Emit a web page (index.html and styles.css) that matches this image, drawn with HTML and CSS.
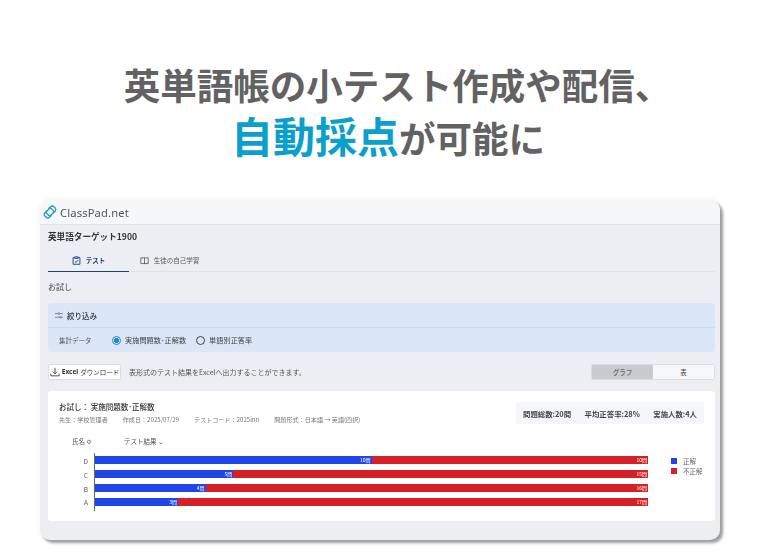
FILE: index.html
```html
<!DOCTYPE html>
<html lang="ja">
<head>
<meta charset="utf-8">
<title>ClassPad.net</title>
<link rel="stylesheet" href="styles.css">
</head>
<body>
<main class="page">
  <h1 class="headline">
    <span class="line first">英単語帳の小テスト作成や配信、</span>
    <span class="line second"><em class="accent">自動採点</em>が可能に</span>
  </h1>
  <section class="window">
    <header class="topbar">
      <svg class="logo" viewBox="0 0 14 14" fill="none" stroke="#1f9cc9" stroke-width="1.3">
        <path d="M5.4 3.8 7.6 1.7a2.3 2.3 0 0 1 3.3 0l1.2 1.2a2.3 2.3 0 0 1 0 3.3L9.9 8.4"/>
        <path d="M8.6 10.2 6.4 12.3a2.3 2.3 0 0 1-3.3 0L1.9 11.1a2.3 2.3 0 0 1 0-3.3L4.1 5.6"/>
        <path d="M4.6 9.4 3.7 8.5a1.6 1.6 0 0 1 0-2.3L6.2 3.7a1.6 1.6 0 0 1 2.3 0l.9.9"/>
        <path d="M9.4 4.6l.9.9a1.6 1.6 0 0 1 0 2.3L7.8 10.3a1.6 1.6 0 0 1-2.3 0l-.9-.9"/>
      </svg>
      <span class="brand">ClassPad.net</span>
    </header>
    <div class="content">
      <h2 class="course">英単語ターゲット1900</h2>
      <nav class="tabs">
        <div class="tab active">
          <svg class="tab-icon" viewBox="0 0 10 10" fill="none" stroke="currentColor" stroke-width="1"><path d="M2.5 1.8H1.2v7.4h7.6V1.8H7.5M3 1h4v1.6H3zM3.2 6l1.3 1.2 2.3-2.6"/></svg>
          <span>テスト</span>
        </div>
        <div class="tab">
          <svg class="tab-icon" viewBox="0 0 10 10" fill="none" stroke="currentColor" stroke-width=".9"><path d="M5 2v7M5 2H.9v6.4H5M5 2h4.1v6.4H5"/></svg>
          <span>生徒の自己学習</span>
        </div>
      </nav>
      <p class="crumb">お試し</p>
      <section class="filter">
        <div class="filter-head">
          <svg class="filter-icon" viewBox="0 0 10 8" fill="none" stroke="#555" stroke-width=".8"><path d="M0 1.6h3.6M6 1.6h4M0 6.2h5.6M8 6.2h2"/><circle cx="4.8" cy="1.6" r="1.1"/><circle cx="6.8" cy="6.2" r="1.1"/></svg>
          <span>絞り込み</span>
        </div>
        <div class="filter-body">
          <span class="filter-label">集計データ</span>
          <label class="radio on"><i class="dot"></i>実施問題数･正解数</label>
          <label class="radio"><i class="dot"></i>単語別正答率</label>
        </div>
      </section>
      <div class="actions">
        <button class="excel">
          <svg class="dl" viewBox="0 0 12 12" fill="none" stroke="#333" stroke-width="1"><path d="M6 1v7M3.4 5.6 6 8.2l2.6-2.6M1 8v2.6h10V8"/></svg>
          <b>Excel</b><span>ダウンロード</span>
        </button>
        <span class="hint">表形式のテスト結果をExcelへ出力することができます。</span>
        <div class="segment">
          <span class="seg on">グラフ</span>
          <span class="seg">表</span>
        </div>
      </div>
      <section class="card">
        <div class="card-head">
          <div class="card-info">
            <h3 class="card-title">お試し： 実施問題数･正解数</h3>
            <div class="meta">
              <span>先生：学校管理者</span>
              <span>作成日：2025/07/29</span>
              <span>テストコード：2025inn</span>
              <span>問題形式：日本語 → 英語(四択)</span>
            </div>
          </div>
          <div class="stats">
            <span>問題総数:20問</span>
            <span>平均正答率:28%</span>
            <span>実施人数:4人</span>
          </div>
        </div>
        <div class="columns">
          <span class="col-name">氏名 ≎</span>
          <span class="col-result">テスト結果 ⌄</span>
        </div>
        <div class="chart">
          <div class="names">
            <span>D</span><span>C</span><span>B</span><span>A</span>
          </div>
          <div class="bars">
            <div class="bar"><span class="ok" style="width:50%">10問</span><span class="ng">10問</span></div>
            <div class="bar"><span class="ok" style="width:25%">5問</span><span class="ng">15問</span></div>
            <div class="bar"><span class="ok" style="width:20%">4問</span><span class="ng">16問</span></div>
            <div class="bar"><span class="ok" style="width:15%">3問</span><span class="ng">17問</span></div>
          </div>
          <ul class="legend">
            <li><i class="swatch blue"></i>正解</li>
            <li><i class="swatch red"></i>不正解</li>
          </ul>
        </div>
      </section>
    </div>
  </section>
</main>
</body>
</html>
```
FILE: styles.css
```css
* { box-sizing: border-box; }
html, body { margin: 0; padding: 0; background: #fff; }
body { font-family: "Noto Sans CJK JP", "Noto Sans", sans-serif; color: #444; width: 761px; height: 557px; overflow: hidden; }
.page { padding-top: 60px; }
.headline { margin: 0; text-align: center; color: #626262; font-size: 36.5px; font-weight: 700; line-height: 50px; }
.line { display: block; white-space: nowrap; }
.line.first { padding-left: 34px; }
.line.second { padding-left: 15px; }
.accent { font-style: normal; color: #0b9fce; font-size: 42px; }
.window { margin: 37px 0 0 40px; width: 680px; height: 340px; background: #edeef2; border-radius: 10px; box-shadow: 3px 3px 3px rgba(0,0,0,.38), 0 0 6px rgba(0,0,0,.06); overflow: hidden; filter: blur(.4px); }
.topbar { height: 25px; background: #f6f7f9; border-bottom: 1px solid #e2e3e7; display: flex; align-items: center; padding-left: 3px; gap: 3px; }
.logo { width: 14px; height: 14px; }
.brand { font-family: "Noto Sans", sans-serif; font-size: 11.2px; letter-spacing: .15px; color: #555; }
.content { padding: 0 5px 0 8px; }
.course { margin: 5px 0 0; font-size: 8.6px; line-height: 13px; font-weight: 700; color: #333; }
.tabs { margin-top: 9px; height: 20px; display: flex; border-bottom: 1px solid #e2e3e7; }
.tab { width: 81px; display: flex; align-items: center; justify-content: center; gap: 5px; font-size: 6.5px; color: #555; padding-bottom: 3px; }
.tab.active { color: #1c3a80; font-weight: 700; border-bottom: 1px solid #1f3f86; height: 20px; }
.tab-icon { width: 9px; height: 9px; flex: none; }
.crumb { margin: 9px 0 0; font-size: 8px; line-height: 12px; color: #444; }
.filter { margin-top: 10px; height: 49px; background: #dbe6f9; border-radius: 4px; }
.filter-head { height: 25px; padding-left: 7px; display: flex; align-items: center; gap: 4px; font-size: 7.5px; font-weight: 500; border-bottom: 1px solid #cfdaee; color: #333; }
.filter-icon { width: 8px; height: 7px; }
.filter-body { height: 24px; display: flex; align-items: center; padding-left: 11px; font-size: 7.2px; color: #444; }
.filter-label { width: 53px; font-size: 6.5px; color: #555; }
.radio { display: flex; align-items: center; gap: 4px; margin-right: 10px; }
.dot { width: 9px; height: 9px; border-radius: 50%; border: 1px solid #444; display: block; }
.radio.on .dot { border-color: #1a8fc0; background: radial-gradient(circle, #1a8fc0 0 2.4px, transparent 2.8px); }
.actions { margin-top: 11px; height: 17px; display: flex; align-items: center; }
.excel { width: 73px; height: 16px; padding: 0; background: #fff; border: 1px solid #dcdde1; border-radius: 2px; display: flex; align-items: center; justify-content: center; gap: 2px; font: inherit; font-size: 6.5px; color: #333; }
.excel b { font-weight: 700; font-family: "Noto Sans", sans-serif; }
.dl { width: 10px; height: 10px; }
.hint { margin-left: 8px; font-size: 7px; color: #555; }
.segment { margin-left: auto; width: 124px; height: 16px; display: flex; font-size: 6.5px; color: #444; border: 1px solid #dcdde1; border-radius: 2px; overflow: hidden; }
.seg { flex: 1; display: flex; align-items: center; justify-content: center; background: #f7f8fa; }
.seg.on { background: #c8cacd; }
.card { margin-top: 11px; height: 130px; background: #fff; border-radius: 4px; padding: 11px 11px 0 11px; }
.card-head { display: flex; justify-content: space-between; height: 24px; }
.card-title { margin: 0; font-size: 7.5px; line-height: 10px; font-weight: 500; color: #333; }
.meta { margin-top: 3px; display: flex; gap: 15px; font-size: 6.1px; line-height: 9px; color: #777; }
.stats { width: 188px; height: 22px; background: #f5f6f9; border-radius: 3px; display: flex; align-items: center; justify-content: space-between; padding: 0 7px; font-size: 7.4px; font-weight: 700; color: #444; }
.columns { margin-top: 10px; height: 10px; display: flex; font-size: 6.5px; line-height: 10px; color: #555; }
.col-name { margin-left: 13px; width: 52px; }
.chart { margin-top: 7px; margin-left: 0; display: flex; height: 58px; }
.names { width: 35px; padding: 3px 6px 0 0; display: flex; flex-direction: column; align-items: flex-end; gap: 0; font-size: 6.5px; color: #555; }
.names span { height: 14px; line-height: 10px; }
.bars { width: 555px; border-left: 1px solid #666; padding: 3px 0 0 0; display: flex; flex-direction: column; gap: 6.5px; }
.bar { height: 7.5px; width: 553px; display: flex; font-size: 5px; line-height: 7.5px; color: #fff; text-align: right; }
.ok { background: #2146e8; padding-right: 1px; }
.ng { flex: 1; background: #d42026; padding-right: 1px; }
.legend { list-style: none; margin: 3px 0 0 22px; padding: 0; font-size: 6.5px; color: #666; }
.legend li { display: flex; align-items: center; height: 10px; gap: 6px; }
.swatch { width: 6px; height: 6px; display: block; }
.blue { background: #2146e8; }
.red { background: #d42026; }
```
